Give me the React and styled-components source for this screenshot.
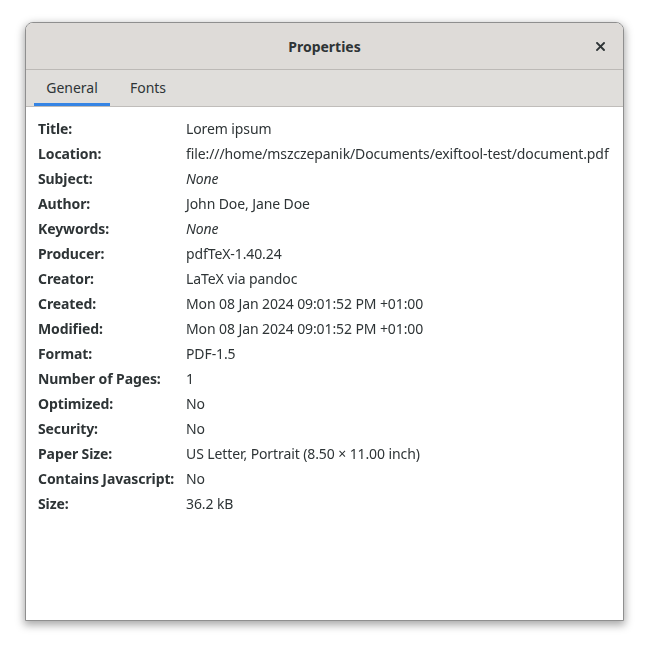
import React from 'react';
import styled, { createGlobalStyle } from 'styled-components';

const GlobalStyle = createGlobalStyle`
  html, body {
    margin: 0;
    padding: 0;
    background: #ffffff;
  }
  body {
    font-family: "Noto Sans", "Open Sans", sans-serif;
    color: #2e3436;
  }
`;

const Page = styled.div`
  width: 649px;
  height: 649px;
  padding: 22px 0 0 25px;
  box-sizing: border-box;
`;

const Window = styled.div`
  width: 599px;
  height: 599px;
  box-sizing: border-box;
  border: 1px solid #8f8f8f;
  border-radius: 8px 8px 0 0;
  background: #ffffff;
  box-shadow: 0 3px 9px 1px rgba(0, 0, 0, 0.35);
  display: flex;
  flex-direction: column;
`;

const HeaderBar = styled.div`
  height: 46px;
  flex-shrink: 0;
  background: #dedbd8;
  border-radius: 7px 7px 0 0;
  border-bottom: 1px solid #bcb9b6;
  display: flex;
  align-items: center;
  justify-content: center;
  position: relative;
`;

const WindowTitle = styled.div`
  font-size: 14px;
  font-weight: 700;
  color: #2e3436;
`;

const CloseButton = styled.button`
  position: absolute;
  right: 13px;
  top: 13px;
  width: 20px;
  height: 20px;
  border: none;
  background: transparent;
  padding: 0;
  display: flex;
  align-items: center;
  justify-content: center;
`;

const TabBar = styled.div`
  height: 36px;
  flex-shrink: 0;
  background: #e0dedb;
  border-bottom: 1px solid #c0bdba;
  display: flex;
  padding-left: 8px;
`;

const Tab = styled.div`
  width: ${p => p.$w}px;
  display: flex;
  align-items: center;
  justify-content: center;
  font-size: 14px;
  color: #2e3436;
  box-sizing: border-box;
  border-bottom: 3px solid ${p => (p.$active ? '#3584e4' : 'transparent')};
  padding-top: 2px;
`;

const Content = styled.div`
  padding: 9px 0 0 12px;
  display: flex;
  flex-direction: column;
  transform: translateZ(0);
`;

const Row = styled.div`
  height: 25px;
  display: flex;
  align-items: center;
  font-size: 14px;
  letter-spacing: -0.1px;
  color: #2e3436;
  white-space: nowrap;
`;

const Label = styled.span`
  width: 148px;
  flex-shrink: 0;
  font-weight: 700;
`;

const Value = styled.span`
  font-style: ${p => (p.$italic ? 'italic' : 'normal')};
`;

const rows = [
  ['Title:', 'Lorem ipsum'],
  ['Location:', 'file:///home/mszczepanik/Documents/exiftool-test/document.pdf'],
  ['Subject:', 'None', true],
  ['Author:', 'John Doe, Jane Doe'],
  ['Keywords:', 'None', true],
  ['Producer:', 'pdfTeX-1.40.24'],
  ['Creator:', 'LaTeX via pandoc'],
  ['Created:', 'Mon 08 Jan 2024 09:01:52 PM +01:00'],
  ['Modified:', 'Mon 08 Jan 2024 09:01:52 PM +01:00'],
  ['Format:', 'PDF-1.5'],
  ['Number of Pages:', '1'],
  ['Optimized:', 'No'],
  ['Security:', 'No'],
  ['Paper Size:', 'US Letter, Portrait (8.50 × 11.00 inch)'],
  ['Contains Javascript:', 'No'],
  ['Size:', '36.2 kB'],
];

const App = () => {
  return (
    <Page>
      <GlobalStyle />
      <Window>
        <HeaderBar>
          <WindowTitle>Properties</WindowTitle>
          <CloseButton aria-label="Close">
            <svg width="9" height="9" viewBox="0 0 9 9">
              <path d="M1 1 L8 8 M8 1 L1 8" stroke="#2e3436" strokeWidth="1.9" strokeLinecap="square" />
            </svg>
          </CloseButton>
        </HeaderBar>
        <TabBar>
          <Tab $w={76} $active>General</Tab>
          <Tab $w={76}>Fonts</Tab>
        </TabBar>
        <Content>
          {rows.map(([label, value, italic]) => (
            <Row key={label}>
              <Label>{label}</Label>
              <Value $italic={italic}>{value}</Value>
            </Row>
          ))}
        </Content>
      </Window>
    </Page>
  );
};

export default App;
